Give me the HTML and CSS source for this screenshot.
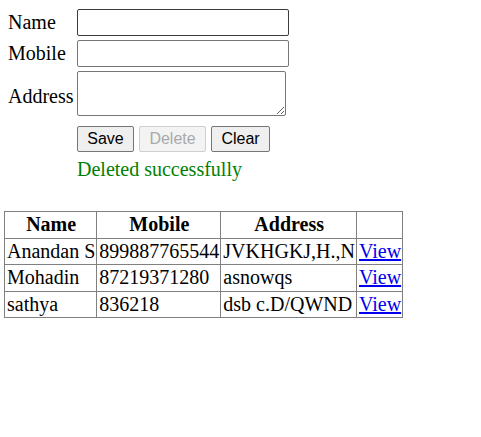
FILE: index.html
```html
<!DOCTYPE html>
<html>
<head>
<meta charset="utf-8">
<link rel="stylesheet" href="styles.css">
</head>
<body>
<div class="form">
  <label class="lbl">Name</label>
  <input class="field field-active" type="text">
  <label class="lbl">Mobile</label>
  <input class="field" type="text">
  <label class="lbl lbl-addr">Address</label>
  <textarea class="area"></textarea>
  <div></div>
  <div class="buttons">
    <button class="btn btn-save">Save</button>
    <button class="btn btn-delete" disabled>Delete</button>
    <button class="btn btn-clear">Clear</button>
  </div>
  <div></div>
  <div class="msg">Deleted successfully</div>
</div>
<table class="list">
  <thead>
    <tr><th>Name</th><th>Mobile</th><th>Address</th><th></th></tr>
  </thead>
  <tbody>
    <tr><td>Anandan S</td><td>899887765544</td><td>JVKHGKJ,H.,N</td><td><a href="#">View</a></td></tr>
    <tr><td>Mohadin</td><td>87219371280</td><td>asnowqs</td><td><a href="#">View</a></td></tr>
    <tr><td>sathya</td><td>836218</td><td>dsb c.D/QWND</td><td><a href="#">View</a></td></tr>
  </tbody>
</table>
</body>
</html>
```
FILE: styles.css
```css
html, body {
  margin: 0;
  padding: 0;
  background: #ffffff;
}
body {
  font-family: "Liberation Serif", "Times New Roman", serif;
  font-size: 20px;
  color: #000000;
}
.form {
  display: grid;
  grid-template-columns: 69px auto;
  justify-content: start;
  align-items: center;
  row-gap: 4px;
  padding: 9px 0 0 8px;
}
.lbl {
  line-height: 23px;
}
.lbl-addr {
  padding-top: 6px;
}
.field {
  box-sizing: border-box;
  width: 212px;
  height: 27px;
  margin: 0;
  padding: 1px 3px;
  border: 1px solid #767676;
  border-radius: 2px;
  background: #ffffff;
  font-family: "Liberation Sans", Arial, sans-serif;
  font-size: 16px;
}
.field-active {
  border-color: #3b3b3b;
}
.area {
  box-sizing: border-box;
  width: 209px;
  height: 45px;
  margin: 0;
  padding: 2px;
  border: 1px solid #767676;
  border-radius: 2px;
  font-family: "Liberation Mono", monospace;
  font-size: 16px;
}
.buttons {
  display: flex;
  gap: 5px;
  margin-top: 6px;
}
.btn {
  box-sizing: border-box;
  height: 26px;
  margin: 0;
  padding: 0 8px;
  border: 1px solid #767676;
  border-radius: 2px;
  background: #efefef;
  color: #000000;
  font-family: "Liberation Sans", Arial, sans-serif;
  font-size: 16px;
}
.btn-save { width: 57px; }
.btn-delete {
  width: 67px;
  color: #a9a9a9;
  border-color: #cfcfcf;
  background: #f3f3f3;
}
.btn-clear { width: 59px; }
.msg {
  color: #008000;
  line-height: 23px;
  margin-top: 2px;
}
.list {
  border-collapse: collapse;
  margin: 30px 0 0 4px;
  font-size: 20px;
}
.list th,
.list td {
  border: 1px solid #808080;
  padding: 1px 1px 1px 2px;
  line-height: 23.5px;
  white-space: nowrap;
}
.list th {
  font-weight: bold;
  text-align: center;
}
.list td {
  text-align: left;
}
.list a {
  color: #0000ee;
  text-decoration: underline;
}
```
